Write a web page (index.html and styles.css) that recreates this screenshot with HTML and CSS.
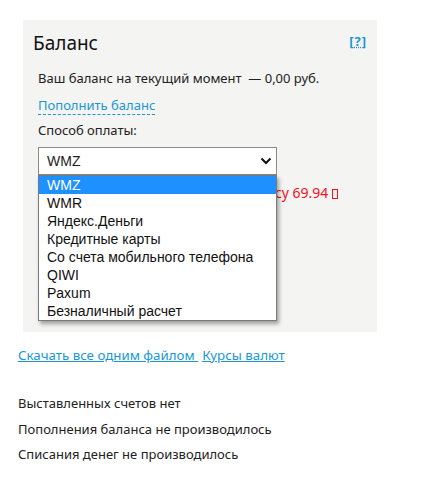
FILE: index.html
```html
<!DOCTYPE html>
<html lang="ru">
<head>
  <meta charset="UTF-8">
  <meta name="viewport" content="width=device-width, initial-scale=1.0">
  <title>Баланс</title>
  <link rel="stylesheet" href="styles.css">
</head>
<body>
  <div class="balance-box">
    <div class="box-head">
      <h2>Баланс</h2>
      <span class="help">[<a href="#">?</a>]</span>
    </div>

    <div class="box-body">
      <p class="current">Ваш баланс на текущий момент&nbsp; — 0,00 руб.</p>
      <a href="#" class="dashed">Пополнить баланс</a>

      <p class="label">Способ оплаты:</p>
      <div class="select-wrap">
        <div class="select">
          <span>WMZ</span>
          <svg width="12" height="8" viewBox="0 0 12 8"><path d="M1.5 1.5 L6 6 L10.5 1.5" fill="none" stroke="#111" stroke-width="2"/></svg>
        </div>
        <ul class="options">
          <li class="active">WMZ</li>
          <li>WMR</li>
          <li>Яндекс.Деньги</li>
          <li>Кредитные карты</li>
          <li>Со счета мобильного телефона</li>
          <li>QIWI</li>
          <li>Paxum</li>
          <li>Безналичный расчет</li>
        </ul>
      </div>
      <div class="rate"><span>Сумма к оплате по курсу 69.94 <span class="tofu"></span></span></div>
    </div>
  </div>

  <div class="links">
    <a href="#">Скачать все одним файлом </a>
    <a href="#">Курсы валют</a>
  </div>

  <div class="history">
    <p>Выставленных счетов нет</p>
    <p>Пополнения баланса не производилось</p>
    <p>Списания денег не производилось</p>
  </div>
</body>
</html>
```

FILE: styles.css
```css
body {
  font-family: "Noto Sans", "Open Sans", sans-serif;
  font-size: 13px;
  color: #222;
  margin: 0;
  padding: 20px 18px;
}

a {
  color: #1a97d5;
}

p {
  margin: 0;
}

.balance-box {
  background: #f4f4f2;
  margin-left: 5px;
  width: 354px;
  height: 312px;
  box-sizing: border-box;
  padding: 9px 10px 0 10px;
}

.box-head {
  display: flex;
  justify-content: space-between;
  align-items: flex-start;
}

.box-head h2 {
  font-size: 19px;
  font-weight: normal;
  margin: 0;
  line-height: 28px;
  color: #111;
}

.help {
  color: #1a97d5;
  font-size: 13px;
  font-weight: bold;
  margin-top: 3px;
  letter-spacing: 1px;
}

.help a {
  text-decoration: underline dotted;
}

.box-body {
  padding: 12px 5px 0 5px;
}

.current {
  line-height: 18px;
  margin-bottom: 9px;
}

.dashed {
  text-decoration: none;
  border-bottom: 1px dashed #1a97d5;
  line-height: 18px;
  display: inline-block;
}

.label {
  margin-top: 6px;
  line-height: 18px;
}

.select-wrap {
  position: relative;
  margin-top: 8px;
  width: 239px;
}

.select {
  height: 28px;
  box-sizing: border-box;
  border: 1px solid #8a8a8a;
  background: #fff;
  display: flex;
  align-items: center;
  justify-content: space-between;
  padding: 0 4px 0 8px;
  font-family: "Liberation Sans", Arial, sans-serif;
  font-size: 14px;
  color: #222;
}

.options {
  position: absolute;
  top: 28px;
  left: 0;
  width: 239px;
  box-sizing: border-box;
  margin: 0;
  padding: 0;
  list-style: none;
  background: #fff;
  border: 1px solid #7a7a7a;
  box-shadow: 2px 3px 4px rgba(0, 0, 0, 0.35);
  font-family: "Liberation Sans", Arial, sans-serif;
  font-size: 14px;
  color: #111;
  z-index: 5;
}

.options li {
  height: 18px;
  line-height: 18px;
  padding-left: 8px;
}

.options li.active {
  background: #1e90ff;
  color: #fff;
}

.rate {
  display: flex;
  justify-content: flex-end;
  color: #f5101f;
  margin-top: 9px;
  line-height: 18px;
  font-size: 14px;
  width: 300px;
  white-space: nowrap;
}

.tofu {
  display: inline-block;
  width: 4px;
  height: 8px;
  border: 1px solid #f5101f;
  vertical-align: -1px;
}

.links {
  margin-top: 14px;
  line-height: 18px;
  font-size: 13.3px;
}

.links a + a {
  margin-left: 4px;
}

.history {
  margin-top: 30px;
}

.history p {
  line-height: 18px;
  margin-bottom: 7.5px;
}
```
